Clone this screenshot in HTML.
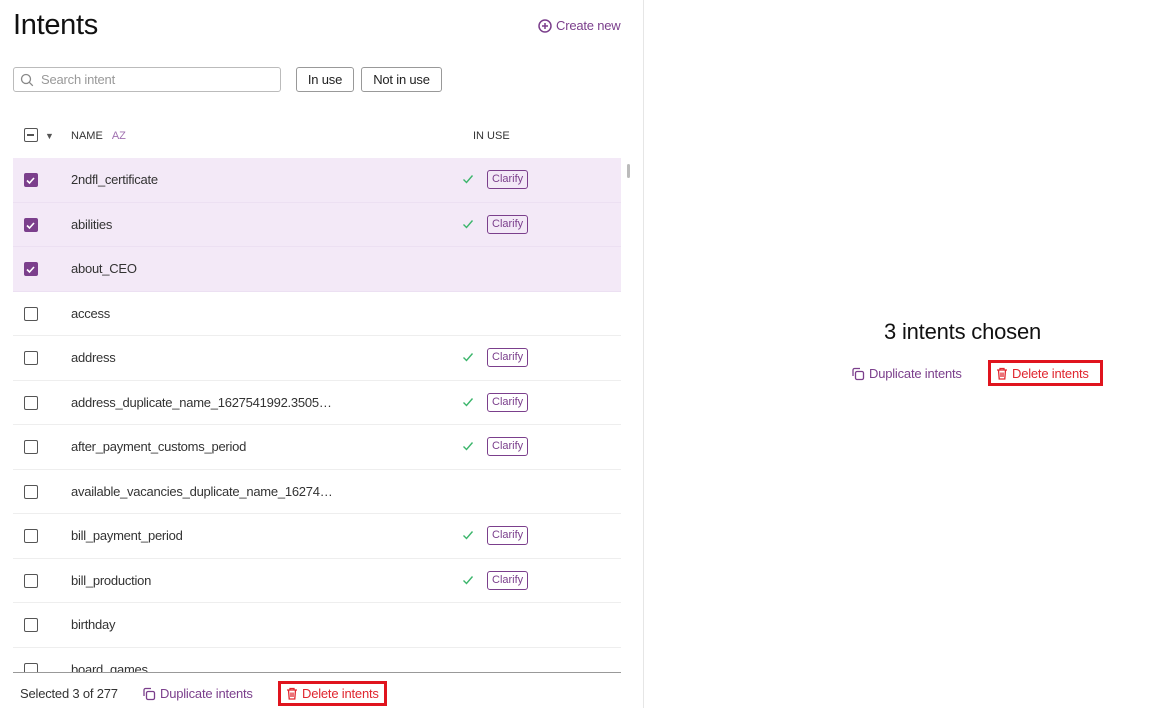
<!DOCTYPE html>
<html><head><style>
*{box-sizing:border-box;margin:0;padding:0}
body{width:1172px;height:708px;overflow:hidden;background:#fff;font-family:"Liberation Sans",sans-serif;color:#333;position:relative}
.left{position:absolute;left:0;top:0;width:644px;height:708px;border-right:1px solid #e6e6e6}
h1{position:absolute;left:13px;top:9px;font-size:29px;font-weight:400;color:#111;letter-spacing:-0.3px}
.create{position:absolute;left:538px;top:18px;font-size:13px;color:#7b3f8c;display:flex;align-items:center;gap:4px;letter-spacing:-0.2px}
.search{position:absolute;left:13px;top:67px;width:268px;height:25px;border:1px solid #bbb;border-radius:3px;font-size:13px;color:#999;padding-left:27px;line-height:23px;letter-spacing:-0.2px}
.search svg{position:absolute;left:6px;top:5px}
.btn{position:absolute;top:67px;height:25px;border:1px solid #999;border-radius:3px;font-size:13px;color:#222;line-height:23px;text-align:center;letter-spacing:-0.2px}
.hdr{position:absolute;top:130px;font-size:11px;color:#333}
.cb{position:absolute;left:24px;width:14px;height:14px;border:1.5px solid #555;border-radius:2px}
.cb.on{background:#7b3f8c;border-color:#7b3f8c}
.rows{position:absolute;left:13px;top:158px;width:608px;height:514px;overflow:hidden}
.row{position:relative;height:44.5px;border-bottom:1px solid #eee;font-size:13px;color:#333;letter-spacing:-0.25px}
.row.sel{background:#f3e9f7;border-bottom-color:#ece0f2}
.row .cb{left:11px;top:15px}
.row .nm{position:absolute;left:58px;top:14px}
.row .ck{position:absolute;left:449px;top:15px}
.row .cl{position:absolute;left:474px;top:12px;border:1px solid #7b3f8c;border-radius:3px;font-size:11px;color:#7b3f8c;padding:2px 4px;line-height:13px;letter-spacing:0}
.foot{position:absolute;left:13px;top:672px;width:608px;border-top:1px solid #999;height:36px;font-size:13px;letter-spacing:-0.2px}
.del{border:3px solid #e0141e;color:#e0262f;display:flex;align-items:center;gap:4px;padding:0 5px;letter-spacing:-0.2px}
.dup{color:#7b3f8c;display:flex;align-items:center;gap:4px;letter-spacing:-0.2px}
</style></head><body>
<div class="left">
<h1>Intents</h1>
<div class="create"><svg width="14" height="14" viewBox="0 0 14 14"><circle cx="7" cy="7" r="6" fill="none" stroke="#7b3f8c" stroke-width="1.5"/><path d="M7 4v6M4 7h6" stroke="#7b3f8c" stroke-width="1.5"/></svg>Create new</div>
<div class="search"><svg width="14" height="14" viewBox="0 0 14 14"><circle cx="6" cy="6" r="4.5" fill="none" stroke="#888" stroke-width="1.3"/><path d="M9.3 9.3l3.5 3.5" stroke="#888" stroke-width="1.3"/></svg>Search intent</div>
<div class="btn" style="left:296px;width:58px">In use</div>
<div class="btn" style="left:361px;width:81px">Not in use</div>
<div class="cb" style="top:128px"><div style="position:absolute;left:2px;top:5px;width:7px;height:1.5px;background:#555"></div></div>
<div class="hdr" style="left:45px;top:131px;font-size:9px;color:#555">▼</div>
<div class="hdr" style="left:71px">NAME <span style="color:#a070b0;margin-left:6px">AZ</span></div>
<div class="hdr" style="left:473px">IN USE</div>
<div style="position:absolute;left:627px;top:164px;width:3px;height:14px;background:#bbb;border-radius:2px"></div>
<div class="rows">
<div class="row sel"><div class="cb on"><svg width="11" height="11" viewBox="0 0 11 11"><path d="M2 5.5l2.5 2.5 4.5-5" fill="none" stroke="#fff" stroke-width="1.6"/></svg></div><span class="nm">2ndfl_certificate</span><svg class="ck" width="12" height="12" viewBox="0 0 12 12"><path d="M1.5 6.5l3 3 6-7" fill="none" stroke="#3bb56b" stroke-width="1.4"/></svg><span class="cl">Clarify</span></div>
<div class="row sel"><div class="cb on"><svg width="11" height="11" viewBox="0 0 11 11"><path d="M2 5.5l2.5 2.5 4.5-5" fill="none" stroke="#fff" stroke-width="1.6"/></svg></div><span class="nm">abilities</span><svg class="ck" width="12" height="12" viewBox="0 0 12 12"><path d="M1.5 6.5l3 3 6-7" fill="none" stroke="#3bb56b" stroke-width="1.4"/></svg><span class="cl">Clarify</span></div>
<div class="row sel"><div class="cb on"><svg width="11" height="11" viewBox="0 0 11 11"><path d="M2 5.5l2.5 2.5 4.5-5" fill="none" stroke="#fff" stroke-width="1.6"/></svg></div><span class="nm">about_CEO</span></div>
<div class="row"><div class="cb"></div><span class="nm">access</span></div>
<div class="row"><div class="cb"></div><span class="nm">address</span><svg class="ck" width="12" height="12" viewBox="0 0 12 12"><path d="M1.5 6.5l3 3 6-7" fill="none" stroke="#3bb56b" stroke-width="1.4"/></svg><span class="cl">Clarify</span></div>
<div class="row"><div class="cb"></div><span class="nm">address_duplicate_name_1627541992.3505…</span><svg class="ck" width="12" height="12" viewBox="0 0 12 12"><path d="M1.5 6.5l3 3 6-7" fill="none" stroke="#3bb56b" stroke-width="1.4"/></svg><span class="cl">Clarify</span></div>
<div class="row"><div class="cb"></div><span class="nm">after_payment_customs_period</span><svg class="ck" width="12" height="12" viewBox="0 0 12 12"><path d="M1.5 6.5l3 3 6-7" fill="none" stroke="#3bb56b" stroke-width="1.4"/></svg><span class="cl">Clarify</span></div>
<div class="row"><div class="cb"></div><span class="nm">available_vacancies_duplicate_name_16274…</span></div>
<div class="row"><div class="cb"></div><span class="nm">bill_payment_period</span><svg class="ck" width="12" height="12" viewBox="0 0 12 12"><path d="M1.5 6.5l3 3 6-7" fill="none" stroke="#3bb56b" stroke-width="1.4"/></svg><span class="cl">Clarify</span></div>
<div class="row"><div class="cb"></div><span class="nm">bill_production</span><svg class="ck" width="12" height="12" viewBox="0 0 12 12"><path d="M1.5 6.5l3 3 6-7" fill="none" stroke="#3bb56b" stroke-width="1.4"/></svg><span class="cl">Clarify</span></div>
<div class="row"><div class="cb"></div><span class="nm">birthday</span></div>
<div class="row"><div class="cb"></div><span class="nm">board_games</span></div>
</div>
<div class="foot">
<span style="position:absolute;left:7px;top:13px;color:#333">Selected 3 of 277</span>
<div class="dup" style="position:absolute;left:129px;top:13px"><svg width="14" height="14" viewBox="0 0 14 14"><rect x="4.5" y="4.5" width="8" height="8" rx="1.5" fill="none" stroke="#7b3f8c" stroke-width="1.3"/><path d="M2 9V3a1.5 1.5 0 0 1 1.5-1.5H9" fill="none" stroke="#7b3f8c" stroke-width="1.3"/></svg>Duplicate intents</div>
<div class="del" style="position:absolute;left:265px;top:8px;height:25px"><svg width="12" height="13" viewBox="0 0 12 13"><path d="M1 3h10M4 3V1.5h4V3M2.5 3l.7 9h5.6l.7-9M5 5.5v4.5M7 5.5v4.5" fill="none" stroke="#e0262f" stroke-width="1.3"/></svg>Delete intents</div>
</div>
</div>
<div style="position:absolute;left:884px;top:319px;font-size:22px;color:#111;letter-spacing:-0.2px">3 intents chosen</div>
<div class="dup" style="position:absolute;left:851px;top:366px;font-size:13px"><svg width="14" height="14" viewBox="0 0 14 14"><rect x="4.5" y="4.5" width="8" height="8" rx="1.5" fill="none" stroke="#7b3f8c" stroke-width="1.3"/><path d="M2 9V3a1.5 1.5 0 0 1 1.5-1.5H9" fill="none" stroke="#7b3f8c" stroke-width="1.3"/></svg>Duplicate intents</div>
<div class="del" style="position:absolute;left:988px;top:360px;width:115px;height:26px;font-size:13px"><svg width="12" height="13" viewBox="0 0 12 13"><path d="M1 3h10M4 3V1.5h4V3M2.5 3l.7 9h5.6l.7-9M5 5.5v4.5M7 5.5v4.5" fill="none" stroke="#e0262f" stroke-width="1.3"/></svg>Delete intents</div>
</body></html>
